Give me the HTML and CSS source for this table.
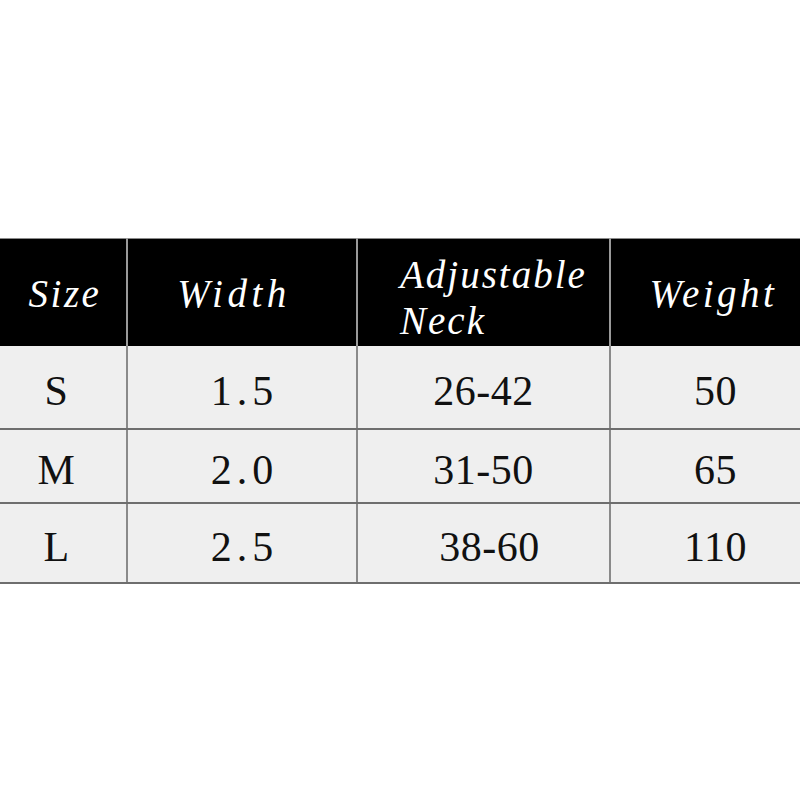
FILE: index.html
```html
<!DOCTYPE html>
<html>
<head>
<meta charset="utf-8">
<link rel="stylesheet" href="styles.css">
</head>
<body>
<div class="page">
  <table class="chart">
    <colgroup>
      <col class="c1"><col class="c2"><col class="c3"><col class="c4">
    </colgroup>
    <thead>
      <tr class="head">
        <th class="first">Size</th>
        <th class="wid">Width</th>
        <th class="neck">Adjustable<br>Neck</th>
        <th class="last">Weight</th>
      </tr>
    </thead>
    <tbody>
      <tr class="r1">
        <td class="first">S</td>
        <td class="dec">1.5</td>
        <td>26-42</td>
        <td class="last">50</td>
      </tr>
      <tr class="r2">
        <td class="first">M</td>
        <td class="dec">2.0</td>
        <td>31-50</td>
        <td class="last">65</td>
      </tr>
      <tr class="r3">
        <td class="first">L</td>
        <td class="dec">2.5</td>
        <td class="off">38-60</td>
        <td class="last">110</td>
      </tr>
    </tbody>
  </table>
</div>
</body>
</html>
```

FILE: styles.css
```css
html, body {
  margin: 0;
  padding: 0;
  background: #ffffff;
}

.page {
  width: 800px;
  height: 800px;
  padding-top: 238px;
  box-sizing: border-box;
}

.chart {
  width: 800px;
  table-layout: fixed;
  border-collapse: collapse;
}

.c1 { width: 127px; }
.c2 { width: 230px; }
.c3 { width: 253px; }
.c4 { width: 190px; }

.chart th,
.chart td {
  padding: 0;
  text-align: center;
  vertical-align: middle;
  border-left: 2px solid #8a8a8a;
  border-right: 2px solid #8a8a8a;
}

.chart th.first,
.chart td.first {
  border-left: none;
}

.chart td.first {
  padding-right: 13px;
}

.chart th.first {
  padding-left: 4px;
}

.chart th.last,
.chart td.last {
  border-right: none;
  padding-left: 20px;
}

.head {
  height: 107px;
  background: #000000;
}

.head th {
  color: #ffffff;
  font-family: "Liberation Serif", serif;
  font-style: italic;
  font-weight: normal;
  font-size: 39px;
  letter-spacing: 2.5px;
  border-top: 1px solid #8a8a8a;
  border-left-color: #9a9a9a;
  border-right-color: #9a9a9a;
  padding-top: 2px;
}

.head th.wid {
  padding-right: 16px;
  letter-spacing: 4.5px;
}

.head th.last {
  letter-spacing: 3.5px;
  padding-left: 16px;
}

.head th.neck {
  text-align: left;
  padding-left: 42px;
  line-height: 46px;
  padding-top: 12px;
  letter-spacing: 2px;
}

.chart td {
  background: #efefef;
  color: #111111;
  font-family: "Liberation Serif", serif;
  font-size: 42px;
  letter-spacing: 0.5px;
  border-bottom: 2px solid #6e6e6e;
  padding-top: 8px;
}

.chart td.dec {
  letter-spacing: 5px;
  padding-left: 5px;
}

.chart td.off {
  padding-left: 12px;
}

.r1 { height: 83px; }
.r2 { height: 74px; }
.r3 { height: 80px; }
```
